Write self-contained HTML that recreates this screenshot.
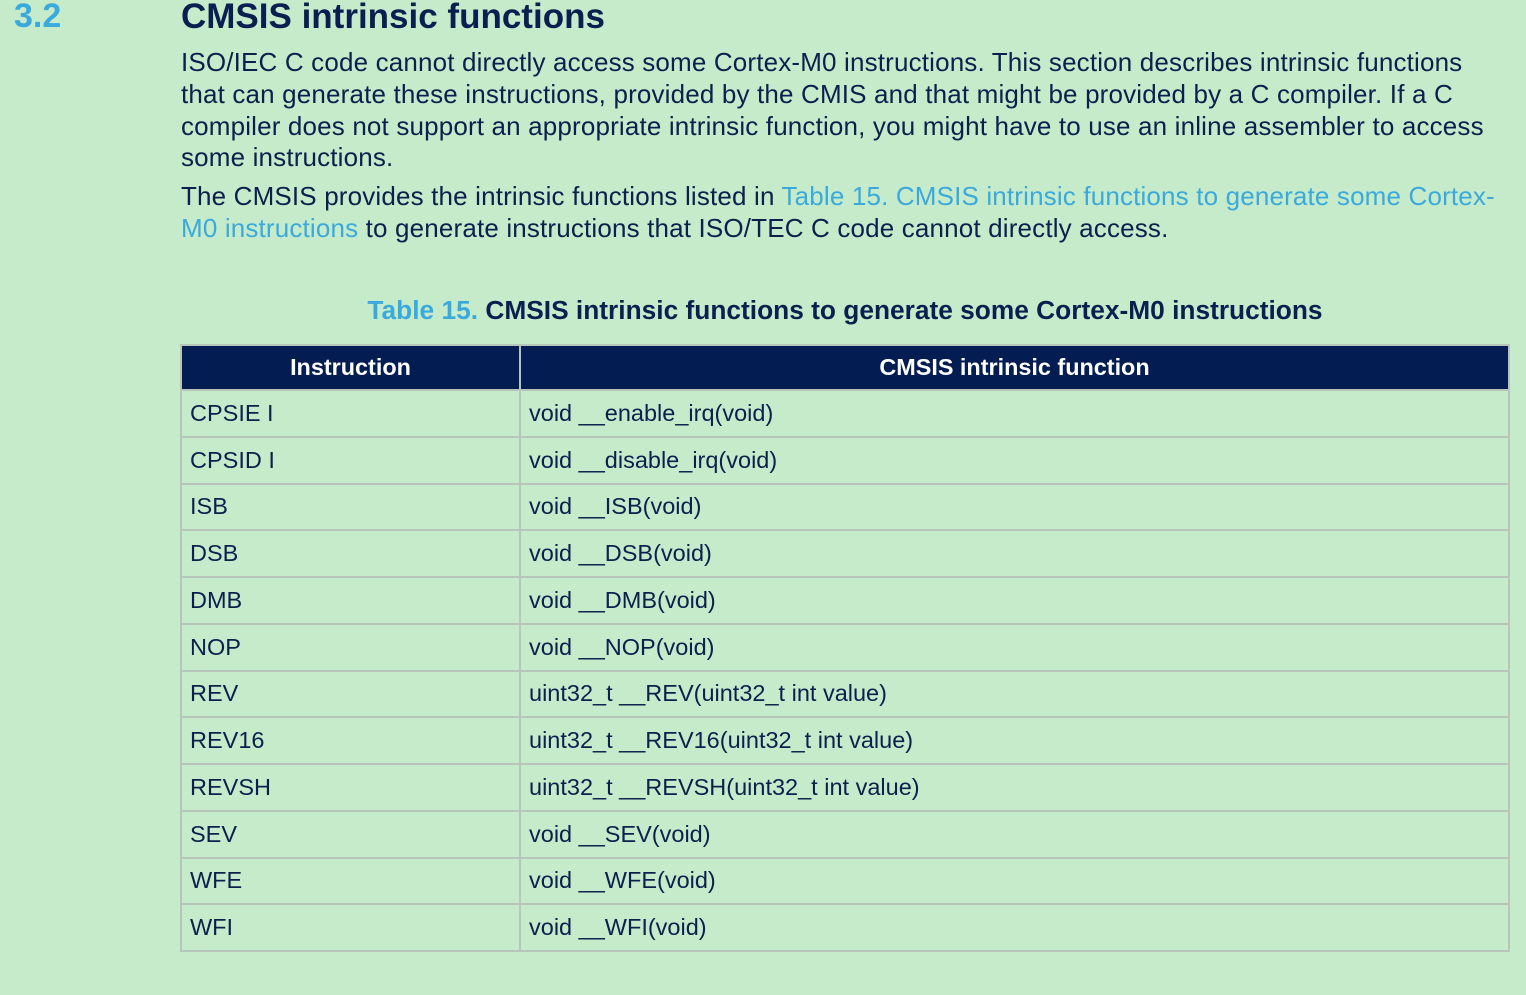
<!DOCTYPE html>
<html><head><meta charset="utf-8"><style>
body{margin:0;background:#c6ebca;width:1526px;height:995px;overflow:hidden;font-family:"Liberation Sans",sans-serif;color:#0c1f4d;position:relative}
.num{position:absolute;left:14px;top:-3px;font-size:34px;font-weight:bold;color:#3aa9dc}
h1{position:absolute;left:181px;top:-3px;margin:0;font-size:35px;font-weight:bold;color:#0a1f4f}
p{position:absolute;left:181px;margin:0;font-size:26px;line-height:31.8px;width:1345px;white-space:nowrap;letter-spacing:0.16px}
.l{color:#3aa9dc}
.cap{position:absolute;left:0;width:1690px;text-align:center;top:295px;font-size:26.3px;font-weight:bold;color:#0a1f4f}
table{position:absolute;left:180px;top:344px;border-collapse:collapse;width:1330px;font-size:23.5px}
td,th{border:2px solid #b7c5bb;height:44.75px;padding:0 0 0 8px;text-align:left}
th{background:#031d52;color:#fff;font-weight:bold;text-align:center;padding:0;height:43px;font-size:23.4px}
td:first-child{width:329px}
</style></head><body>
<div class="num">3.2</div>
<h1>CMSIS intrinsic functions</h1>
<p style="top:47px">ISO/IEC C code cannot directly access some Cortex-M0 instructions. This section describes intrinsic functions<br>that can generate these instructions, provided by the CMIS and that might be provided by a C compiler. If a C<br>compiler does not support an appropriate intrinsic function, you might have to use an inline assembler to access<br>some instructions.</p>
<p style="top:181px">The CMSIS provides the intrinsic functions listed in <span class="l">Table 15. CMSIS intrinsic functions to generate some Cortex-<br>M0 instructions</span> to generate instructions that ISO/TEC C code cannot directly access.</p>
<div class="cap"><span class="l">Table 15.</span> CMSIS intrinsic functions to generate some Cortex-M0 instructions</div>
<table>
<tr><th>Instruction</th><th>CMSIS intrinsic function</th></tr>
<tr><td>CPSIE I</td><td>void __enable_irq(void)</td></tr>
<tr><td>CPSID I</td><td>void __disable_irq(void)</td></tr>
<tr><td>ISB</td><td>void __ISB(void)</td></tr>
<tr><td>DSB</td><td>void __DSB(void)</td></tr>
<tr><td>DMB</td><td>void __DMB(void)</td></tr>
<tr><td>NOP</td><td>void __NOP(void)</td></tr>
<tr><td>REV</td><td>uint32_t __REV(uint32_t int value)</td></tr>
<tr><td>REV16</td><td>uint32_t __REV16(uint32_t int value)</td></tr>
<tr><td>REVSH</td><td>uint32_t __REVSH(uint32_t int value)</td></tr>
<tr><td>SEV</td><td>void __SEV(void)</td></tr>
<tr><td>WFE</td><td>void __WFE(void)</td></tr>
<tr><td>WFI</td><td>void __WFI(void)</td></tr>
</table>
</body></html>
